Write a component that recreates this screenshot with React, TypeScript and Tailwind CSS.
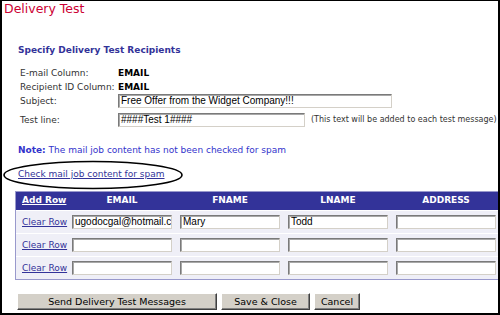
import React from "react";

const inputCls =
  "h-[14px] shrink-0 bg-white border-t border-l border-t-[#7a7a7a] border-l-[#7a7a7a] border-r border-b border-r-[#d4d0c8] border-b-[#d4d0c8] shadow-[inset_1px_1px_0_#a8a8a8] font-['Liberation_Sans',sans-serif] text-[10px] leading-[12px] px-[2px] text-black overflow-hidden whitespace-nowrap";

function Cell({ value, w }: { value?: string; w: string }) {
  return <div className={`${inputCls} ${w}`}>{value ?? ""}</div>;
}

function Row({ email, fname, lname }: { email?: string; fname?: string; lname?: string }) {
  return (
    <div className="flex items-center h-[23px] bg-[#efeff7] border-t border-white">
      <a className="w-[56px] shrink-0 pl-[6px] text-[9px] leading-[12px] text-[#333399] underline whitespace-nowrap">Clear Row</a>
      <div className="w-[108px] shrink-0"><Cell value={email} w="w-[100px]" /></div>
      <div className="w-[108px] shrink-0"><Cell value={fname} w="w-[100px]" /></div>
      <div className="w-[108px] shrink-0"><Cell value={lname} w="w-[100px]" /></div>
      <div className="w-[108px] shrink-0"><Cell w="w-[100px]" /></div>
    </div>
  );
}

function Btn({ label, w }: { label: string; w: string }) {
  return (
    <button
      className={`${w} h-[17px] bg-[#d4d0c8] text-[9.5px] leading-[13px] text-black border border-t-white border-l-white border-r-[#404040] border-b-[#404040] shadow-[inset_-1px_-1px_0_#808080] whitespace-nowrap`}
    >
      {label}
    </button>
  );
}

export default function App() {
  return (
    <div className="w-[500px] h-[315px] bg-white border-t border-l-2 border-r-2 border-b-2 border-black relative overflow-hidden font-['DejaVu_Sans',sans-serif] text-[#333333]">
      <div className="pl-[2px] text-[12.5px] leading-[15px] text-[#cc0033]">Delivery Test</div>
      <div className="pl-[16px] mt-[28px] text-[9px] leading-[12px] font-bold text-[#333399] whitespace-nowrap">Specify Delivery Test Recipients</div>
      <div className="pl-[18px] mt-[10px] text-[9px] leading-[14px] whitespace-nowrap">
        <div className="flex"><span className="w-[98px] shrink-0">E-mail Column:</span><span className="font-bold text-black">EMAIL</span></div>
        <div className="flex"><span className="w-[98px] shrink-0">Recipient ID Column:</span><span className="font-bold text-black">EMAIL</span></div>
        <div className="flex items-center h-[14px]"><span className="w-[98px] shrink-0">Subject:</span><Cell value="Free Offer from the Widget Company!!!" w="w-[274px]" /></div>
        <div className="flex items-center h-[14px] mt-[5px]"><span className="w-[98px] shrink-0">Test line:</span><Cell value="####Test 1####" w="w-[187px]" /><span className="ml-[6px] text-[8px]">(This text will be added to each test message)</span></div>
      </div>
      <div className="pl-[16px] mt-[16px] text-[9px] leading-[14px] text-[#3333cc] whitespace-nowrap"><b>Note:</b> The mail job content has not been checked for spam</div>
      <div className="pl-[16px] mt-[10px] text-[9px] leading-[14px] text-[#333399] whitespace-nowrap"><a className="underline">Check mail job content for spam</a></div>
      <div className="ml-[13px] mt-[10px] w-[500px] border border-[#9999cc]">
        <div className="flex items-center h-[18px] bg-[#333399] text-white text-[9px] font-bold">
          <span className="w-[56px] shrink-0 pl-[6px] underline">Add Row</span>
          <span className="w-[108px] shrink-0"><span className="block w-[100px] text-center">EMAIL</span></span>
          <span className="w-[108px] shrink-0"><span className="block w-[100px] text-center">FNAME</span></span>
          <span className="w-[108px] shrink-0"><span className="block w-[100px] text-center">LNAME</span></span>
          <span className="w-[108px] shrink-0"><span className="block w-[100px] text-center">ADDRESS</span></span>
        </div>
        <Row email="ugodocgal@hotmail.com" fname="Mary" lname="Todd" />
        <Row />
        <Row />
      </div>
      <div className="flex gap-[4px] pl-[15px] mt-[13px]">
        <Btn label="Send Delivery Test Messages" w="w-[200px]" />
        <Btn label="Save & Close" w="w-[89px]" />
        <Btn label="Cancel" w="w-[46px]" />
      </div>
      <svg className="absolute left-0 top-0 pointer-events-none" width="500" height="315">
        <ellipse cx="91" cy="174" rx="89" ry="13.5" fill="none" stroke="black" strokeWidth="1.6" />
      </svg>
    </div>
  );
}
